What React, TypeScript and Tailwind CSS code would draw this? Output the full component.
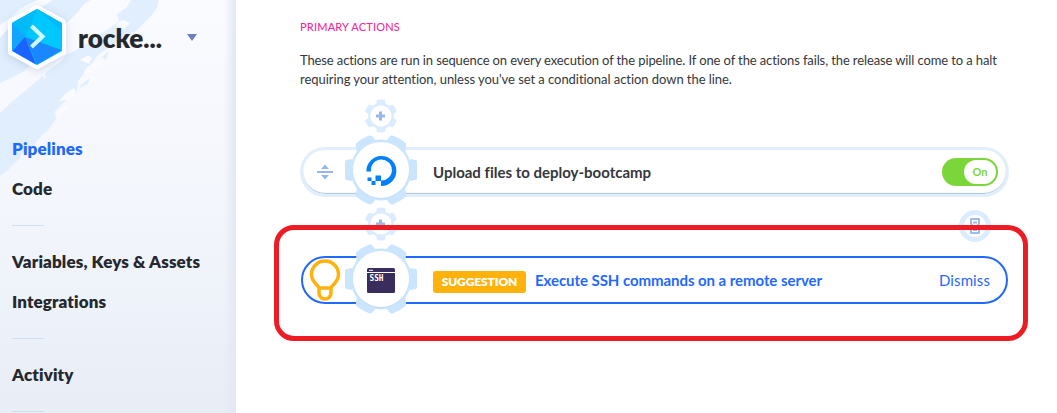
import React from 'react';

function gearPath(outer: number, inner: number, start: number, tip: number, root: number) {
  const pt = (r: number, deg: number) => {
    const a = (deg * Math.PI) / 180;
    return `${(r * Math.cos(a)).toFixed(2)} ${(r * Math.sin(a)).toFixed(2)}`;
  };
  let d = '';
  for (let i = 0; i < 6; i++) {
    const c = start + i * 60;
    d += `${i === 0 ? 'M' : 'L'}${pt(inner, c - root)} L${pt(outer, c - tip)} A${outer} ${outer} 0 0 1 ${pt(outer, c + tip)} L${pt(inner, c + root)} A${inner} ${inner} 0 0 1 ${pt(inner, c + 60 - root)} `;
  }
  return d + 'Z';
}

const CORNER_TOOTH = 'M5 -29.5 9 -33.7Q10 -34.800 11.500 -34.400Q19 -31.800 24.500 -27Q25.500 -26 25.200 -25L24 -17 14 -20Z';

function BigGear({ children }: { children: React.ReactNode }) {
  return (
    <svg width="74" height="74" viewBox="-37 -37 74 74" className="block">
      <g fill="#cbe5ff">
        <circle r="30.500" />
        <path d="M-36 -8.500Q-36 -9.800 -34.500 -10L-29 -11V11L-34.500 10Q-36 9.700 -36 8.500ZM36 -8.500Q36 -9.800 34.500 -10L29 -11V11L34.500 10Q36 9.700 36 8.500Z" />
        <path d={CORNER_TOOTH} />
        <path d={CORNER_TOOTH} transform="scale(-1 1)" />
        <path d={CORNER_TOOTH} transform="scale(1 -1)" />
        <path d={CORNER_TOOTH} transform="scale(-1 -1)" />
      </g>
      <circle r="28.200" cy="0.600" fill="#b9d6f4" />
      <circle r="28.100" fill="#fff" />
      {children}
    </svg>
  );
}

function PlusGear() {
  return (
    <svg width="36" height="36" viewBox="-18 -18 36 36" className="block">
      <path d={gearPath(15.5, 12, 30, 12, 19)} fill="#dcecff" stroke="#dcecff" strokeWidth="2" strokeLinejoin="round" />
      <circle r="10.6" fill="#fff" />
      <path d="M-5 0H4M-.5 -4.500V4.500" stroke="#97b8e6" strokeWidth="3" />
    </svg>
  );
}

function Logo() {
  return (
    <svg width="72" height="76" viewBox="0 0 72 76" className="block overflow-visible drop-shadow-[0_2px_4px_rgba(60,90,150,0.2)]">
      <path d="M37 9 62 22.500V51.500L37 65 12 51.500V22.500Z" fill="#fff" stroke="#fff" strokeWidth="8" strokeLinejoin="round" />
      <path d="M37 10 61 23.500V50.500L37 64 13 50.500V23.500Z" fill="#00b8fc" stroke="#00b8fc" strokeWidth="2" strokeLinejoin="round" />
      <path d="M37 9 61.500 23V50L25 37Z" fill="#00c8ff" />
      <path d="M37 9 61.500 23V31Z" fill="#00b9ff" />
      <path d="M12.500 22.500 37 9 25 37Z" fill="#00bbf8" />
      <path d="M12 23 25 37 12 51Z" fill="#11a5ff" />
      <path d="M25 37 12.500 51 36 64.500Z" fill="#1b63ff" />
      <path d="M25 37 61.500 50 37 64.500Z" fill="#1a86ff" />
      <path d="M31.500 26 42.500 36.500 31.500 47" fill="none" stroke="#d4f8ff" strokeWidth="4" />
    </svg>
  );
}

function Brush() {
  return (
    <svg width="236" height="180" viewBox="0 0 236 180" className="absolute left-0 top-0">
      <path d="M0 0H90L84 4 78 12 70 20 64 26 50 45 36 60 24 71 13 77 0 83Z" fill="#e0eefe" />
      <path d="M0 38 8 29 18 21 26 15 35 9 45 5 53 0H37L27 5 20 9 11 17 0 25Z" fill="#f9fbff" />
      <path d="M0 113 12 102 25 91 38 80 50 69 62 61 66 55 78 49 88 43 95 37 109 29 119 21 117 14 126 9 131 0H159L157 8 150 17 141 26 132 34 120 41 108 48 98 55 92 63 85 73 78 81 77 91 69 98 61 105 55 111 56 119 48 130 41 136 33 146 22 153 19 159 8 170 0 176Z" fill="#e0eefe" />
      <path d="M80 60 88 55 92 58 89 64ZM86 68 100 59 103 61 96 70 83 75ZM59 101 66 93 74 88 76 91 72 99ZM93 76 99 76 94 81 81 87 84 80ZM55 114 66 106 68 108 58 117ZM43 73 44 80 46 76ZM110 58 101 66 108 63Z" fill="#f9fbff" />
      <path d="M82 84 90 78 88 84 79 88ZM102 57 109 51 106 60ZM120 12 126 8 124 13 118 19Z" fill="#e0eefe" />
      <path d="M115 24 123 20 130 23 124 29ZM119 3 125 1 123 6 116 10Z" fill="#f9fbff" />
    </svg>
  );
}

function NavItem({ label, active = false }: { label: string; active?: boolean }) {
  return (
    <a className={`block h-10 whitespace-nowrap text-[17px] font-extrabold leading-10 tracking-[0.12px] ${active ? 'text-[#1f69ff]' : 'text-[#25282d]'}`}>
      {label}
    </a>
  );
}

function Sidebar() {
  return (
    <aside className="relative h-full w-[236px] shrink-0 overflow-hidden bg-linear-to-b from-[#fafbff] via-[#f3f6fc] to-[#e8edf6]">
      <Brush />
      <div className="absolute inset-y-0 right-0 w-3 bg-linear-to-r from-transparent to-[#e2e7f0]" />
      <div className="relative flex h-[129px] items-start">
        <Logo />
        <span className="ml-1.5 mt-[22px] w-[109px] text-[26px] font-extrabold leading-8 text-[#25282d]">rocke...</span>
        <svg width="10" height="7" viewBox="0 0 10 7" className="mt-[34px]"><path d="M0 0H10L5 7Z" fill="#6e80bd" /></svg>
      </div>
      <nav className="relative pl-3">
        <NavItem label="Pipelines" active />
        <NavItem label="Code" />
        <hr className="mb-4 mt-4 w-8 border-[#cfdff3]" />
        <NavItem label="Variables, Keys &amp; Assets" />
        <NavItem label="Integrations" />
        <hr className="mb-4 mt-4 w-8 border-[#cfdff3]" />
        <NavItem label="Activity" />
        <hr className="mt-4 w-8 border-[#cfdff3]" />
      </nav>
    </aside>
  );
}

export default function App() {
  return (
    <div className="relative flex h-[413px] w-[1057px] overflow-hidden bg-white font-['Lato',sans-serif] [font-variant-ligatures:none]">
      <Sidebar />
      <main className="flex w-[773px] shrink-0 flex-col pl-16 pt-[18px]">
        <h2 className="h-[33px] text-[11px] font-medium leading-[18px] tracking-[0.17px] text-[#f12d9b]">PRIMARY ACTIONS</h2>
        <p className="h-[47px] whitespace-nowrap text-[13px] leading-[19px] text-[#34373b]">
          <span className="block tracking-[-0.11px]">
            These actions are run in sequence on every execution of the pipeline. If one of the actions fails, the release will come to a halt
          </span>
          <span className="block tracking-[-0.055px]">
            requiring your attention, unless you've set a conditional action down the line.
          </span>
        </p>
        <div className="ml-[63px] h-[49px]"><PlusGear /></div>

        <section className="relative flex h-[50px] shrink-0 items-center rounded-full border-3 border-[#e1eefb] bg-white pl-[130px] pr-2 shadow-[inset_0_-1px_1px_#abc4e2]">
          <svg width="16" height="16" viewBox="0 0 16 16" className="absolute left-[14px] top-[14px]">
            <path d="M4 5 8 .5 12 5ZM4 11 8 15.500 12 11Z" fill="#97b8e6" />
            <path d="M0 8H16" stroke="#97b8e6" strokeWidth="2" />
          </svg>
          <div className="absolute left-[41px] top-[-17px]">
            <BigGear>
              <path d="M0 16V10.500A10.500 10.500 0 1 0 -10 1.500H-14.600A15 15 0 1 1 0 16Z" fill="#0080ff" />
              <path d="M-5.500 5.500H0V11H-5.500ZM-9.500 11H-5.500V15H-9.500ZM-13.500 7.500H-9.500V11H-13.500Z" fill="#0080ff" />
            </BigGear>
          </div>
          <span className="text-[15px] font-bold text-[#34373b]">Upload files to deploy-bootcamp</span>
          <button className="ml-auto flex h-7 w-14 items-center justify-end rounded-full bg-[#7bd63a] p-0.5">
            <span className="flex h-6 w-8 items-center justify-center rounded-full bg-white text-[11px] font-bold text-[#7bd63a]">On</span>
          </button>
        </section>

        <div className="flex h-[59px] items-start justify-between pl-[63px] pr-[18px]">
          <div className="mt-[9px]"><PlusGear /></div>
          <div className="mt-[13px] flex size-8 items-center justify-center rounded-full border-5 border-[#dcecff]">
            <svg width="12" height="18" viewBox="0 0 12 18" className="shrink-0">
              <path d="M2 2H10V6.500L8.500 9 10 11.500V16H2V11.500L3.500 9 2 6.500ZM4 5.500H8M4 13H8" fill="none" stroke="#9dbceb" strokeWidth="2" strokeLinejoin="round" />
            </svg>
          </div>
        </div>

        <section className="relative ml-px mr-px flex h-12 shrink-0 items-center rounded-full border-2 border-[#1f69ff] bg-white pl-[130px] pr-4">
          <svg width="32" height="44" viewBox="0 0 32 44" className="absolute left-[6px] top-0">
            <path d="M10 30C9.500 27 2.500 24.500 2.500 16.500A13.500 13.500 0 0 1 29.500 16.500C29.500 24.500 22.500 27 22 30ZM10 30V35A6 6 0 0 0 22 35V30" fill="none" stroke="#ffb10c" strokeWidth="3.500" strokeLinejoin="round" />
          </svg>
          <div className="absolute left-[41px] top-[-16px]">
            <BigGear>
              <rect x="-14" y="-11" width="28" height="25" rx="1.500" fill="#382d5d" />
              <path d="M-14 -6.500H14" stroke="#fff" />
              <path d="M-12 -8.700H-8" stroke="#fff" />
              <text x="-11.500" y="2.300" fontSize="8.500" fontWeight="700" fill="#fff" textLength="14" lengthAdjust="spacingAndGlyphs" fontFamily="'DejaVu Sans Mono', monospace">SSH</text>
            </BigGear>
          </div>
          <span className="mt-[3px] flex h-[22px] w-[93px] items-center justify-center rounded-[3px] bg-[#ffb10c] text-[12px] font-extrabold tracking-[-0.1px] text-white">SUGGESTION</span>
          <span className="ml-[9px] text-[15px] font-bold tracking-[-0.06px] text-[#1f69ff]">Execute SSH commands on a remote server</span>
          <span className="ml-auto text-[15px] tracking-[0.1px] text-[#1f69ff]">Dismiss</span>
        </section>
      </main>
      <div className="pointer-events-none absolute left-[274px] top-[225px] h-[116px] w-[754px] rounded-[20px] border-5 border-[#ed1c24]" />
    </div>
  );
}
